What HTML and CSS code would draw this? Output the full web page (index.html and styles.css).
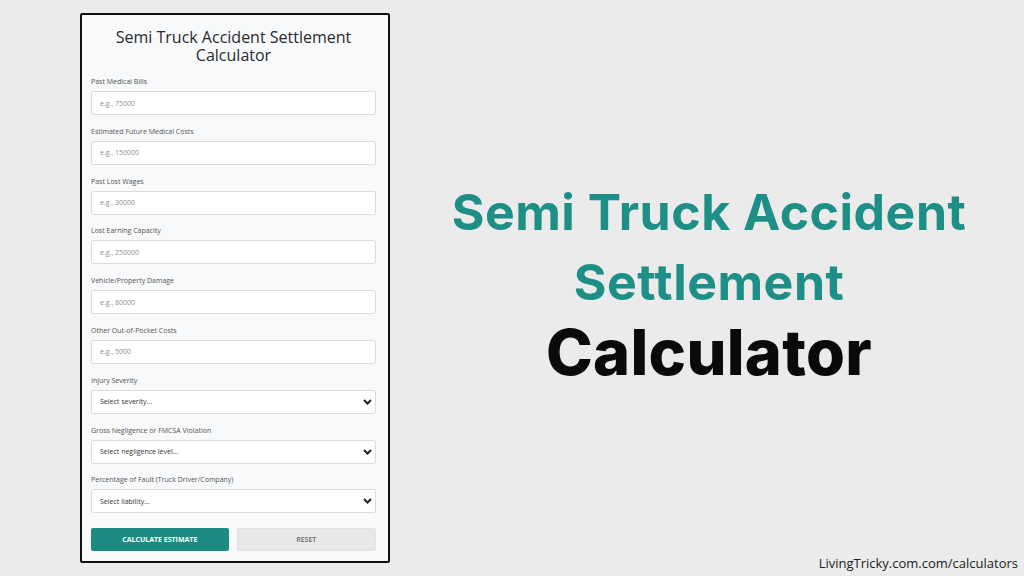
FILE: index.html
```html
<!DOCTYPE html>
<html lang="en-US">
<head>
<title>Semi Truck Accident Settlement Calculator</title>
<link rel="stylesheet" href="styles.css">
</head>
<body>
<div class="page">

  <div class="calc">
    <h1 class="calc-title">Semi Truck Accident Settlement Calculator</h1>

    <div class="field">
      <label>Past Medical Bills</label>
      <input type="text" placeholder="e.g., 75000">
    </div>
    <div class="field">
      <label>Estimated Future Medical Costs</label>
      <input type="text" placeholder="e.g., 150000">
    </div>
    <div class="field">
      <label>Past Lost Wages</label>
      <input type="text" placeholder="e.g., 30000">
    </div>
    <div class="field">
      <label>Lost Earning Capacity</label>
      <input type="text" placeholder="e.g., 250000">
    </div>
    <div class="field">
      <label>Vehicle/Property Damage</label>
      <input type="text" placeholder="e.g., 80000">
    </div>
    <div class="field">
      <label>Other Out-of-Pocket Costs</label>
      <input type="text" placeholder="e.g., 5000">
    </div>
    <div class="field">
      <label>Injury Severity</label>
      <div class="select">
        <span>Select severity...</span>
        <svg width="9" height="6" viewBox="0 0 9 6"><path d="M1 1l3.5 3.5L8 1" fill="none" stroke="#222" stroke-width="2"/></svg>
      </div>
    </div>
    <div class="field">
      <label>Gross Negligence or FMCSA Violation</label>
      <div class="select">
        <span>Select negligence level...</span>
        <svg width="9" height="6" viewBox="0 0 9 6"><path d="M1 1l3.5 3.5L8 1" fill="none" stroke="#222" stroke-width="2"/></svg>
      </div>
    </div>
    <div class="field">
      <label>Percentage of Fault (Truck Driver/Company)</label>
      <div class="select">
        <span>Select liability...</span>
        <svg width="9" height="6" viewBox="0 0 9 6"><path d="M1 1l3.5 3.5L8 1" fill="none" stroke="#222" stroke-width="2"/></svg>
      </div>
    </div>

    <div class="buttons">
      <button class="btn-calc" type="button">Calculate Estimate</button>
      <button class="btn-reset" type="button">Reset</button>
    </div>
  </div>

  <div class="side">
    <div class="headline">
      <div class="teal">Semi Truck Accident</div>
      <div class="teal">Settlement</div>
      <div class="dark">Calculator</div>
    </div>
    <div class="site">LivingTricky.com.com/calculators</div>
  </div>

</div>
</body>
</html>
```

FILE: styles.css
```css
body {
  margin: 0;
  background-color: #ebebeb;
}
.page {
  display: flex;
  width: 1024px;
  height: 576px;
}

/* calculator card */
.calc {
  margin: 13px 0 0 80px;
  width: 285px;
  height: 524px;
  padding: 13px 12px 9px 9px;
  background-color: #f8f9fa;
  border: 2px solid #111;
  border-radius: 2px;
  font-family: "Open Sans", sans-serif;
}
.calc-title {
  margin: 0 0 13px;
  font-size: 16px;
  line-height: 18px;
  font-weight: 500;
  text-align: center;
  color: #2b2b2b;
}
.field {
  margin-bottom: 11.8px;
}
.field label {
  display: block;
  font-size: 7px;
  line-height: 10px;
  color: #555;
  margin-bottom: 4px;
}
.field input, .select {
  display: block;
  box-sizing: border-box;
  width: 100%;
  height: 24px;
  margin: 0;
  padding: 0 8px;
  background-color: white;
  border: 1px solid #dcdcdc;
  border-radius: 2px;
  font-family: "Open Sans", sans-serif;
  font-size: 7px;
  color: #333;
}
.field input::placeholder { color: #8e8e8e; }
.select {
  display: flex;
  align-items: center;
  justify-content: space-between;
  padding: 0 3px 0 8px;
}

.buttons {
  display: flex;
  gap: 8px;
  margin-top: 15px;
}
.buttons button {
  flex: 1;
  height: 23px;
  border-radius: 2px;
  font-family: "Open Sans", sans-serif;
  font-size: 7px;
  text-transform: uppercase;
  cursor: pointer;
}
.btn-calc {
  background-color: #1c8c83;
  border: none;
  color: white;
  font-weight: 700;
}
.btn-reset {
  background-color: #e8e8e8;
  border: 1px solid #e2e2e2;
  color: #666;
  font-weight: 600;
}

/* right side headline */
.side {
  flex: 1;
  display: flex;
  flex-direction: column;
  padding-right: 6px;
}
.headline {
  flex: 1;
  display: flex;
  flex-direction: column;
  align-items: center;
  justify-content: center;
  padding: 10px 0 0 10px;
  font-family: Inter, sans-serif;
  font-weight: 700;
}
.teal {
  color: #1d8f87;
  font-size: 50px;
  line-height: 70px;
  letter-spacing: 0.5px;
}
.dark {
  color: #0a0a0a;
  font-size: 63px;
  line-height: 70px;
  font-weight: 800;
  letter-spacing: 0.3px;
}
.site {
  text-align: right;
  font-family: "Open Sans", sans-serif;
  font-size: 13px;
  color: #222;
  padding-bottom: 4px;
}
```
